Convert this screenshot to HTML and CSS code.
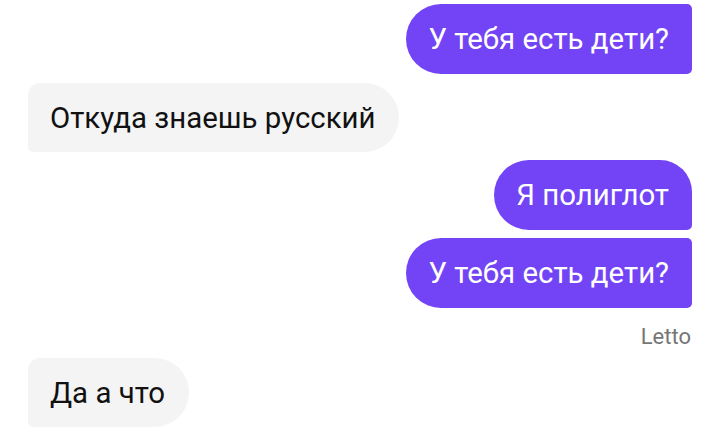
FILE: index.html
```html
<!DOCTYPE html>
<html lang="ru">
<head>
<meta charset="utf-8">
<link rel="stylesheet" href="styles.css">
</head>
<body>
<div class="chat">
  <div class="row out"><div class="bubble sent first">У тебя есть дети?</div></div>
  <div class="row in"><div class="bubble recv">Откуда знаешь русский</div></div>
  <div class="row out"><div class="bubble sent top">Я полиглот</div></div>
  <div class="row out"><div class="bubble sent mid">У тебя есть дети?</div></div>
  <div class="row out"><div class="sender">Letto</div></div>
  <div class="row in"><div class="bubble recv last">Да а что</div></div>
</div>
</body>
</html>
```
FILE: styles.css
```css
html, body {
  margin: 0;
  padding: 0;
  background: #ffffff;
}
body {
  width: 720px;
  height: 440px;
  overflow: hidden;
  font-family: Roboto, "Noto Sans", sans-serif;
}
.chat {
  display: flex;
  flex-direction: column;
  padding: 4px 28px 0 28px;
  gap: 8px;
}
.row {
  display: flex;
}
.row.out { justify-content: flex-end; }
.row.in { justify-content: flex-start; }
.bubble {
  height: 70px;
  box-sizing: border-box;
  display: flex;
  align-items: center;
  font-size: 29.4px;
  padding: 0 23px 0 22px;
  white-space: nowrap;
}
.sent {
  background: #7344f5;
  color: #ffffff;
  border-radius: 35px 5px 5px 35px;
}
.sent.top {
  border-radius: 35px 32px 5px 35px;
}
.recv {
  background: #f4f4f4;
  color: #111111;
  border-radius: 12px 35px 35px 5px;
  padding: 0 24px 0 22px;
  height: 69px;
  margin-top: 1px;
}
.sender {
  font-size: 22px;
  line-height: 26px;
  color: #767676;
  padding: 8px 1px 0 0;
}
.recv.last {
  margin-top: 0;
}
```
